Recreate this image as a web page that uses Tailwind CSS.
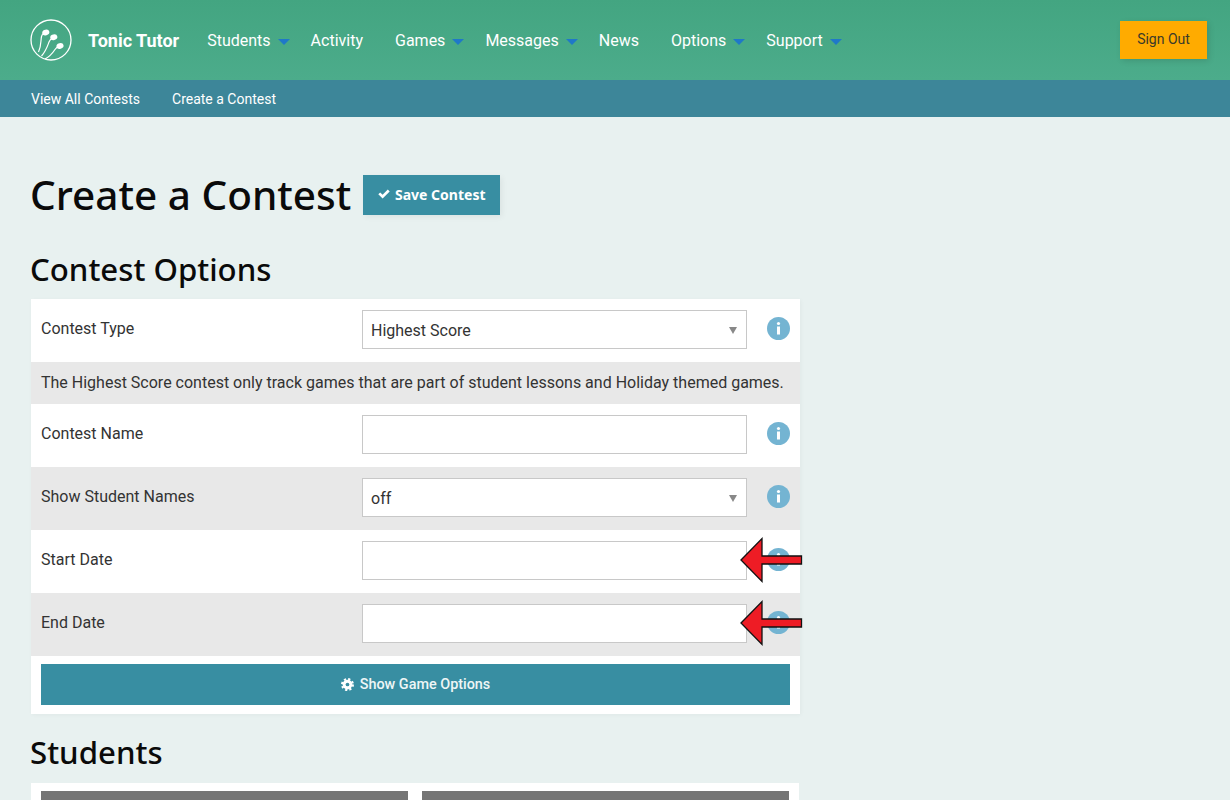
<!DOCTYPE html>
<html lang="en">
<head>
    <meta charset="UTF-8">
    <meta name="viewport" content="width=device-width, initial-scale=1.0">
    <title>Create a Contest</title>
    <script src="https://cdn.jsdelivr.net/npm/@tailwindcss/browser@4"></script>
</head>
<body class="bg-[#e8f1f0] font-['Roboto',sans-serif] text-[#333]">
<div class="relative h-[800px] overflow-hidden">
    <!-- top nav -->
    <header class="h-[80px] bg-gradient-to-b from-[#43a581] to-[#4cac8b] flex items-center pl-[29px] pr-[23px] text-white">
        <svg class="w-[44px] h-[44px] shrink-0" viewBox="0 0 44 44" fill="none" stroke="#fff">
            <circle cx="22" cy="22" r="20" stroke-width="1.300"/>
            <path d="M9.500 34C12.500 28 11.500 23 12.500 18.500C13 16.500 13.800 15.500 15 15" stroke-width="1.200"/>
            <path d="M12.500 38C17 33 18.500 28 20 24C20.800 22 22 20.800 23.500 20" stroke-width="1.200"/>
            <path d="M16 41C21 38.500 24 34.500 26 31.500C27 30 28 29.200 29.500 28.500" stroke-width="1.200"/>
            <ellipse cx="16.800" cy="14.500" rx="3.600" ry="2.800" fill="#fff" stroke="none" transform="rotate(-15 16.800 14.500)"/>
            <ellipse cx="24.800" cy="19.300" rx="3.600" ry="2.800" fill="#fff" stroke="none" transform="rotate(-15 24.800 19.300)"/>
            <ellipse cx="31" cy="28" rx="3.600" ry="2.800" fill="#fff" stroke="none" transform="rotate(-15 31 28)"/>
        </svg>
        <a class="ml-[15px] mt-[1px] text-[18px] font-bold">Tonic Tutor</a>
        <nav class="ml-[12px] mt-[1px] flex items-center text-[16px] text-white">
            <a class="pl-4 pr-[5px] flex items-center">Students<span class="ml-[7px] mt-[2px] w-0 h-0 border-x-[6px] border-x-transparent border-t-[6px] border-t-[#1f78c8]"></span></a>
            <a class="px-4">Activity</a>
            <a class="pl-4 pr-[5px] flex items-center">Games<span class="ml-[7px] mt-[2px] w-0 h-0 border-x-[6px] border-x-transparent border-t-[6px] border-t-[#1f78c8]"></span></a>
            <a class="pl-4 pr-[5px] flex items-center">Messages<span class="ml-[7px] mt-[2px] w-0 h-0 border-x-[6px] border-x-transparent border-t-[6px] border-t-[#1f78c8]"></span></a>
            <a class="px-4">News</a>
            <a class="pl-4 pr-[5px] flex items-center">Options<span class="ml-[7px] mt-[2px] w-0 h-0 border-x-[6px] border-x-transparent border-t-[6px] border-t-[#1f78c8]"></span></a>
            <a class="pl-4 pr-[5px] flex items-center">Support<span class="ml-[7px] mt-[2px] w-0 h-0 border-x-[6px] border-x-transparent border-t-[6px] border-t-[#1f78c8]"></span></a>
        </nav>
        <button class="ml-auto w-[87px] h-[38px] pb-[2px] bg-[#ffab00] text-[14px] text-[#3a3a2a] shadow-[2px_2px_6px_rgba(0,0,0,0.12)]">Sign Out</button>
    </header>
    <!-- sub nav -->
    <div class="h-[37px] pt-[1px] bg-[#3d8699] flex items-center pl-[31px] gap-[32px] text-[14px] text-white">
        <a>View All Contests</a>
        <a>Create a Contest</a>
    </div>

    <main class="pl-[31px] pt-[58px]">
        <div class="flex items-center h-[40px] gap-[12px] font-['Noto_Sans',sans-serif]">
            <h1 class="-ml-[1px] text-[40.500px] leading-[40px] font-medium text-[#0a0a0a]">Create a Contest</h1>
            <button class="w-[137px] h-[40px] pb-[2px] bg-[#388ea2] text-white text-[14px] font-bold flex items-center justify-center gap-[5px] shadow-[2px_2px_6px_rgba(0,0,0,0.06)]">
                <svg class="w-[12px] h-[12px]" viewBox="0 0 12 12" fill="#fff"><path d="M0.300 6.300L2.200 4.400L4.600 6.800L9.800 1.600L11.700 3.500L4.600 10.600Z"/></svg>
                Save Contest
            </button>
        </div>

        <h2 class="-ml-[1px] mt-[34px] h-[40px] leading-[40px] mb-[10px] text-[31.200px] font-medium font-['Noto_Sans',sans-serif] text-[#0a0a0a]">Contest Options</h2>

        <section class="w-[769px] bg-white shadow-[1px_1px_4px_rgba(0,0,0,0.04)]">
            <div class="h-[63px] pb-[2px] flex items-center pl-[10px]">
                <label class="w-[321px] -mt-[2px]">Contest Type</label>
                <div class="relative">
                    <select class="appearance-none block w-[385px] h-[39px] border border-[#c8c8c8] bg-white px-[8px] pt-[2px] text-[16px] text-[#333]"><option>Highest Score</option></select>
                    <span class="absolute right-[10px] top-[17px] w-0 h-0 border-x-[4px] border-x-transparent border-t-[7px] border-t-[#888]"></span>
                </div>
                <svg class="ml-[20px] -mt-[2px] w-[23px] h-[23px]" viewBox="0 0 23 23"><circle cx="11.500" cy="11.500" r="11.500" fill="#74b4d2"/><circle cx="11.500" cy="6.500" r="1.600" fill="#fff"/><rect x="10" y="9.500" width="3" height="8" fill="#fff"/></svg>
            </div>
            <div class="h-[42px] flex items-center pl-[10px] bg-[#e8e8e8]">The Highest Score contest only track games that are part of student lessons and Holiday themed games.</div>
            <div class="h-[63px] pb-[2px] flex items-center pl-[10px]">
                <label class="w-[321px] -mt-[2px]">Contest Name</label>
                <input class="w-[385px] h-[39px] border border-[#c8c8c8] bg-white" type="text">
                <svg class="ml-[20px] -mt-[2px] w-[23px] h-[23px]" viewBox="0 0 23 23"><circle cx="11.500" cy="11.500" r="11.500" fill="#74b4d2"/><circle cx="11.500" cy="6.500" r="1.600" fill="#fff"/><rect x="10" y="9.500" width="3" height="8" fill="#fff"/></svg>
            </div>
            <div class="h-[63px] pb-[2px] flex items-center pl-[10px] bg-[#e8e8e8]">
                <label class="w-[321px] -mt-[2px]">Show Student Names</label>
                <div class="relative">
                    <select class="appearance-none block w-[385px] h-[39px] border border-[#c8c8c8] bg-white px-[8px] pt-[2px] text-[16px] text-[#333]"><option>off</option></select>
                    <span class="absolute right-[10px] top-[17px] w-0 h-0 border-x-[4px] border-x-transparent border-t-[7px] border-t-[#888]"></span>
                </div>
                <svg class="ml-[20px] -mt-[2px] w-[23px] h-[23px]" viewBox="0 0 23 23"><circle cx="11.500" cy="11.500" r="11.500" fill="#74b4d2"/><circle cx="11.500" cy="6.500" r="1.600" fill="#fff"/><rect x="10" y="9.500" width="3" height="8" fill="#fff"/></svg>
            </div>
            <div class="h-[63px] pb-[2px] flex items-center pl-[10px]">
                <label class="w-[321px] -mt-[2px]">Start Date</label>
                <input class="w-[385px] h-[39px] border border-[#c8c8c8] bg-white" type="text">
                <svg class="ml-[20px] -mt-[2px] w-[23px] h-[23px]" viewBox="0 0 23 23"><circle cx="11.500" cy="11.500" r="11.500" fill="#74b4d2"/><circle cx="11.500" cy="6.500" r="1.600" fill="#fff"/><rect x="10" y="9.500" width="3" height="8" fill="#fff"/></svg>
            </div>
            <div class="h-[63px] pb-[2px] flex items-center pl-[10px] bg-[#e8e8e8]">
                <label class="w-[321px] -mt-[2px]">End Date</label>
                <input class="w-[385px] h-[39px] border border-[#c8c8c8] bg-white" type="text">
                <svg class="ml-[20px] -mt-[2px] w-[23px] h-[23px]" viewBox="0 0 23 23"><circle cx="11.500" cy="11.500" r="11.500" fill="#74b4d2"/><circle cx="11.500" cy="6.500" r="1.600" fill="#fff"/><rect x="10" y="9.500" width="3" height="8" fill="#fff"/></svg>
            </div>
            <div class="h-[58px] pt-[8px] px-[10px]">
                <button class="w-full h-[41px] bg-[#388ea2] text-[14.400px] font-medium text-[#eef6f6] flex items-center justify-center gap-[6px]">
                    <svg class="w-[13px] h-[13px]" viewBox="0 0 12 12"><circle cx="6" cy="6" r="4.500" fill="#fff"/><circle cx="6" cy="6" r="5" fill="none" stroke="#fff" stroke-width="2" stroke-dasharray="2 1.930"/><circle cx="6" cy="6" r="1.700" fill="#388ea2"/></svg>
                    Show Game Options
                </button>
            </div>
        </section>

        <h2 class="-ml-[1px] mt-[18px] h-[40px] leading-[40px] mb-[11px] text-[31.200px] font-medium font-['Noto_Sans',sans-serif] text-[#0a0a0a]">Students</h2>

        <section class="w-[768px] h-[200px] bg-white pt-[8px] px-[10px] flex gap-[14px]">
            <div class="w-[367px] bg-[#757575]"></div>
            <div class="w-[367px] bg-[#757575]"></div>
        </section>
    </main>

    <!-- red annotation arrows drawn over the form -->
    <svg class="absolute left-[738px] top-[536px] w-[66px] h-[48px]" viewBox="0 0 66 48"><path d="M3 24L24 2.500V20H63.500V28H24V45.500Z" fill="#ee1c25" stroke="#111" stroke-width="1.300"/></svg>
    <svg class="absolute left-[738px] top-[599px] w-[66px] h-[48px]" viewBox="0 0 66 48"><path d="M3 24L24 2.500V20H63.500V28H24V45.500Z" fill="#ee1c25" stroke="#111" stroke-width="1.300"/></svg>
</div>
</body>
</html>
